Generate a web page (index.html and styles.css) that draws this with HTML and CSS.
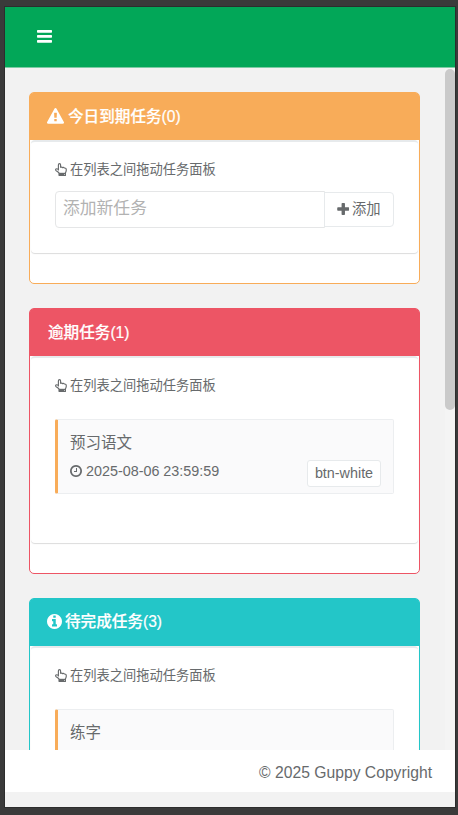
FILE: index.html
```html
<!DOCTYPE html>
<html lang="zh-CN">
<head>
<meta charset="utf-8">
<title>Guppy</title>
<link rel="stylesheet" href="styles.css">
</head>
<body>
<svg class="defs" width="0" height="0">
  <symbol id="hand" viewBox="0 0 12 13"><path d="M3.4 7.5V1.9Q3.4.6 4.5.6T5.6 1.9V4.3Q6.9 3.7 7.5 4.6Q8.7 4.1 9.3 5Q11.3 4.8 11.3 6.9Q11.3 8.3 10.4 10V12.3H4.2V10.2Q3.3 8.8 1.5 7.9Q.3 7.2.8 6.1Q1.5 5.2 3.4 6.4" fill="none" stroke="currentColor" stroke-width="1.15" stroke-linejoin="round"/><path d="M3.700 9.800h7.200v3H3.700z" fill="currentColor"/><path d="M9 11.200h.8v.8H9z" fill="#fff"/></symbol>
</svg>
<div class="window">
  <header class="navbar">
    <svg class="bars" viewBox="0 0 15 13"><path d="M.7 0h13.6q.7 0 .7.7v1.4q0 .7-.7.7H.7Q0 2.800 0 2.100V.7Q0 0 .7 0zM.7 5h13.600q.7 0 .7.700v1.400q0 .7-.7.7H.7Q0 7.800 0 7.100V5.700Q0 5 .7 5zM.7 10h13.600q.7 0 .7.7v1.400q0 .7-.7.7H.7q-.7 0-.7-.7v-1.400q0-.7.7-.7z"/></svg>
  </header>
  <div class="viewport">
    <main class="content">
      <section class="panel warning">
        <h5 class="heading"><svg class="tri" viewBox="0 0 1792 1792"><path d="M1024 1375v-190q0-14-9.500-23.500t-22.500-9.500h-192q-13 0-22.500 9.500t-9.500 23.500v190q0 14 9.500 23.500t22.500 9.500h192q13 0 22.500-9.500t9.500-23.500zm-2-374l18-459q0-12-10-19-13-11-24-11h-220q-11 0-24 11-10 7-10 21l17 457q0 10 10 16.500t24 6.500h185q14 0 23.500-6.500t10.500-16.500zm-14-934l768 1408q35 63-2 126-17 29-46.500 46t-63.500 17h-1536q-34 0-63.500-17t-46.500-46q-37-63-2-126l768-1408q17-31 47-49t65-18 65 18 47 49z"/></svg><span>今日到期任务(0)</span></h5>
        <div class="body">
          <p class="hint"><svg><use href="#hand"/></svg><span>在列表之间拖动任务面板</span></p>
          <div class="add-row">
            <div class="field">添加新任务</div>
            <div class="add"><svg viewBox="0 0 11 11"><path d="M4.900 0h1.700q.7 0 .7.700v3.300h3.200q.7 0 .7.700v1.700q0 .7-.7.700H7.300v3.200q0 .7-.7.700H4.900q-.7 0-.7-.7V7.100H.9q-.7 0-.7-.7V4.700Q.2 4 .9 4h3.300V.7q0-.7.7-.7z"/></svg><span>添加</span></div>
          </div>
        </div>
      </section>
      <section class="panel danger">
        <h5 class="heading"><span>逾期任务(1)</span></h5>
        <div class="body">
          <p class="hint"><svg><use href="#hand"/></svg><span>在列表之间拖动任务面板</span></p>
          <div class="task">
            <div class="title">预习语文</div>
            <div class="meta">
              <svg viewBox="128 128 1536 1536"><path d="M1024 544v448q0 14-9 23t-23 9h-320q-14 0-23-9t-9-23v-64q0-14 9-23t23-9h224v-352q0-14 9-23t23-9h64q14 0 23 9t9 23zm416 352q0-148-73-273t-198-198-273-73-273 73-198 198-73 273 73 273 198 198 273 73 273-73 198-198 73-273zm224 0q0 209-103 385.500t-279.500 279.500-385.500 103-385.500-103-279.500-279.500-103-385.500 103-385.500 279.500-279.500 385.500-103 385.500 103 279.500 279.500 103 385.500z"/></svg>
              <span>2025-08-06 23:59:59</span>
              <span class="tag">btn-white</span>
            </div>
          </div>
        </div>
      </section>
      <section class="panel info">
        <h5 class="heading"><svg class="inf" viewBox="128 128 1536 1536"><path d="M1152 1376v-160q0-14-9-23t-23-9h-96v-512q0-14-9-23t-23-9h-320q-14 0-23 9t-9 23v160q0 14 9 23t23 9h96v320h-96q-14 0-23 9t-9 23v160q0 14 9 23t23 9h448q14 0 23-9t9-23zm-128-896v-160q0-14-9-23t-23-9h-192q-14 0-23 9t-9 23v160q0 14 9 23t23 9h192q14 0 23-9t9-23zm640 416q0 209-103 385.500t-279.500 279.500-385.500 103-385.500-103-279.500-279.500-103-385.500 103-385.500 279.500-279.500 385.500-103 385.500 103 279.500 279.500 103 385.500z"/></svg><span>待完成任务(3)</span></h5>
        <div class="body">
          <p class="hint"><svg><use href="#hand"/></svg><span>在列表之间拖动任务面板</span></p>
          <div class="task"><div class="title">练字</div></div>
        </div>
      </section>
    </main>
    <div class="track"><div class="thumb"></div></div>
  </div>
  <footer class="footer">© 2025 Guppy Copyright</footer>
</div>
</body>
</html>
```
FILE: styles.css
```css
* { box-sizing: border-box; }
body {
  margin: 0;
  height: 815px;
  padding: 7px 3px 8px 5px;
  overflow: hidden;
  background: #3a3a3a;
  color: #676a6c;
  font-family: "Liberation Sans", "Noto Sans CJK SC", sans-serif;
}
svg { fill: currentColor; flex: none; }
.defs { display: none; }
.window {
  height: 800px;
  display: flex;
  flex-direction: column;
  background: #f2f2f2;
  box-shadow: 0 0 0 1px #2d2d2d;
}
.navbar {
  height: 61px;
  flex: none;
  padding: 23px 32px;
  background: #02a758;
  border-bottom: 1px solid #7dcba4;
  color: #fff;
}
.bars { display: block; width: 15px; height: 13px; }
.viewport { height: 682px; flex: none; display: flex; overflow: hidden; }
.content { flex: 1; padding: 24px 25px 0 24px; }
.track { width: 10px; background: #f4f4f4; padding-top: 1px; }
.thumb { height: 341px; border-radius: 5px; background: #cacaca; }
.panel {
  width: 391px;
  margin-bottom: 24px;
  border: 1px solid;
  border-radius: 5px;
  background: #fff;
}
.warning { height: 192px; border-color: #f8ac59; }
.danger { height: 266px; border-color: #ed5565; }
.info { height: 300px; border-color: #23c6c8; }
.heading {
  height: 47px;
  margin: 0;
  padding: 0 18px 0 17px;
  display: flex;
  align-items: center;
  gap: 4px;
  border-radius: 3px 3px 0 0;
  color: #fff;
  font: 500 15.6px/24px "Liberation Sans", "Noto Sans CJK SC", sans-serif;
  -webkit-text-stroke: .2px #fff;
}
.heading span { margin-top: 1px; }
.warning .heading { background: #f8ac59; }
.danger .heading { background: #ed5565; padding-left: 18px; }
.info .heading { background: #23c6c8; }
.info .heading span { margin: -1px 0 0 -1px; }
.tri { width: 17px; height: 17px; }
.inf { width: 15px; height: 15px; margin-top: -2px; }
.body {
  margin: 0 1px;
  padding: 19px 24px 24px;
  height: 113px;
  border-top: 2px solid #e7eaec;
  border-radius: 4px;
  box-shadow: 0 1px 1px rgba(0, 0, 0, .14);
}
.danger .body { height: 187px; }
.info .body { height: 240px; }
.hint {
  height: 18px;
  margin: 0;
  display: flex;
  align-items: center;
  gap: 3px;
  font-size: 13.25px;
  line-height: 18px;
}
.hint svg { width: 12px; height: 13px; margin-top: -1px; }
.add-row { display: flex; align-items: center; margin-top: 12px; }
.field {
  width: 270px;
  height: 37px;
  padding: 0 7px;
  border: 1px solid #e5e6e7;
  border-radius: 4px 0 0 4px;
  color: #b2b2b2;
  font-size: 16.8px;
  line-height: 33px;
}
.add {
  width: 70px;
  height: 35px;
  margin-left: -1px;
  padding-left: 12px;
  display: flex;
  align-items: center;
  gap: 3px;
  border: 1px solid #e7eaec;
  border-radius: 0 4px 4px 0;
  font-size: 14.3px;
}
.add svg { width: 12px; height: 12px; margin-top: -2px; }
.add span { margin-top: -4px; }
.task {
  width: 339px;
  height: 75px;
  margin-top: 24px;
  padding: 12px 12px 0 12px;
  background: #fafafb;
  border: 1px solid #eceef0;
  border-left: 3px solid #f8ac59;
  border-radius: 2px;
}
.title { height: 22px; font-size: 15.5px; line-height: 22px; }
.meta {
  display: flex;
  align-items: center;
  height: 26px;
  margin-top: 6px;
  font-size: 14.35px;
}
.meta svg { width: 12px; height: 12px; margin: -5px 4px 0 0; }
.meta > span:not(.tag) { margin-top: -5px; }
.tag {
  width: 74px;
  height: 27px;
  margin-left: auto;
  border: 1px solid #e7eaec;
  border-radius: 3px;
  background: #fff;
  line-height: 24px;
  text-align: center;
}
.footer {
  height: 42px;
  padding-right: 23px;
  background: #fff;
  font-size: 15.7px;
  line-height: 45px;
  text-align: right;
}
```
